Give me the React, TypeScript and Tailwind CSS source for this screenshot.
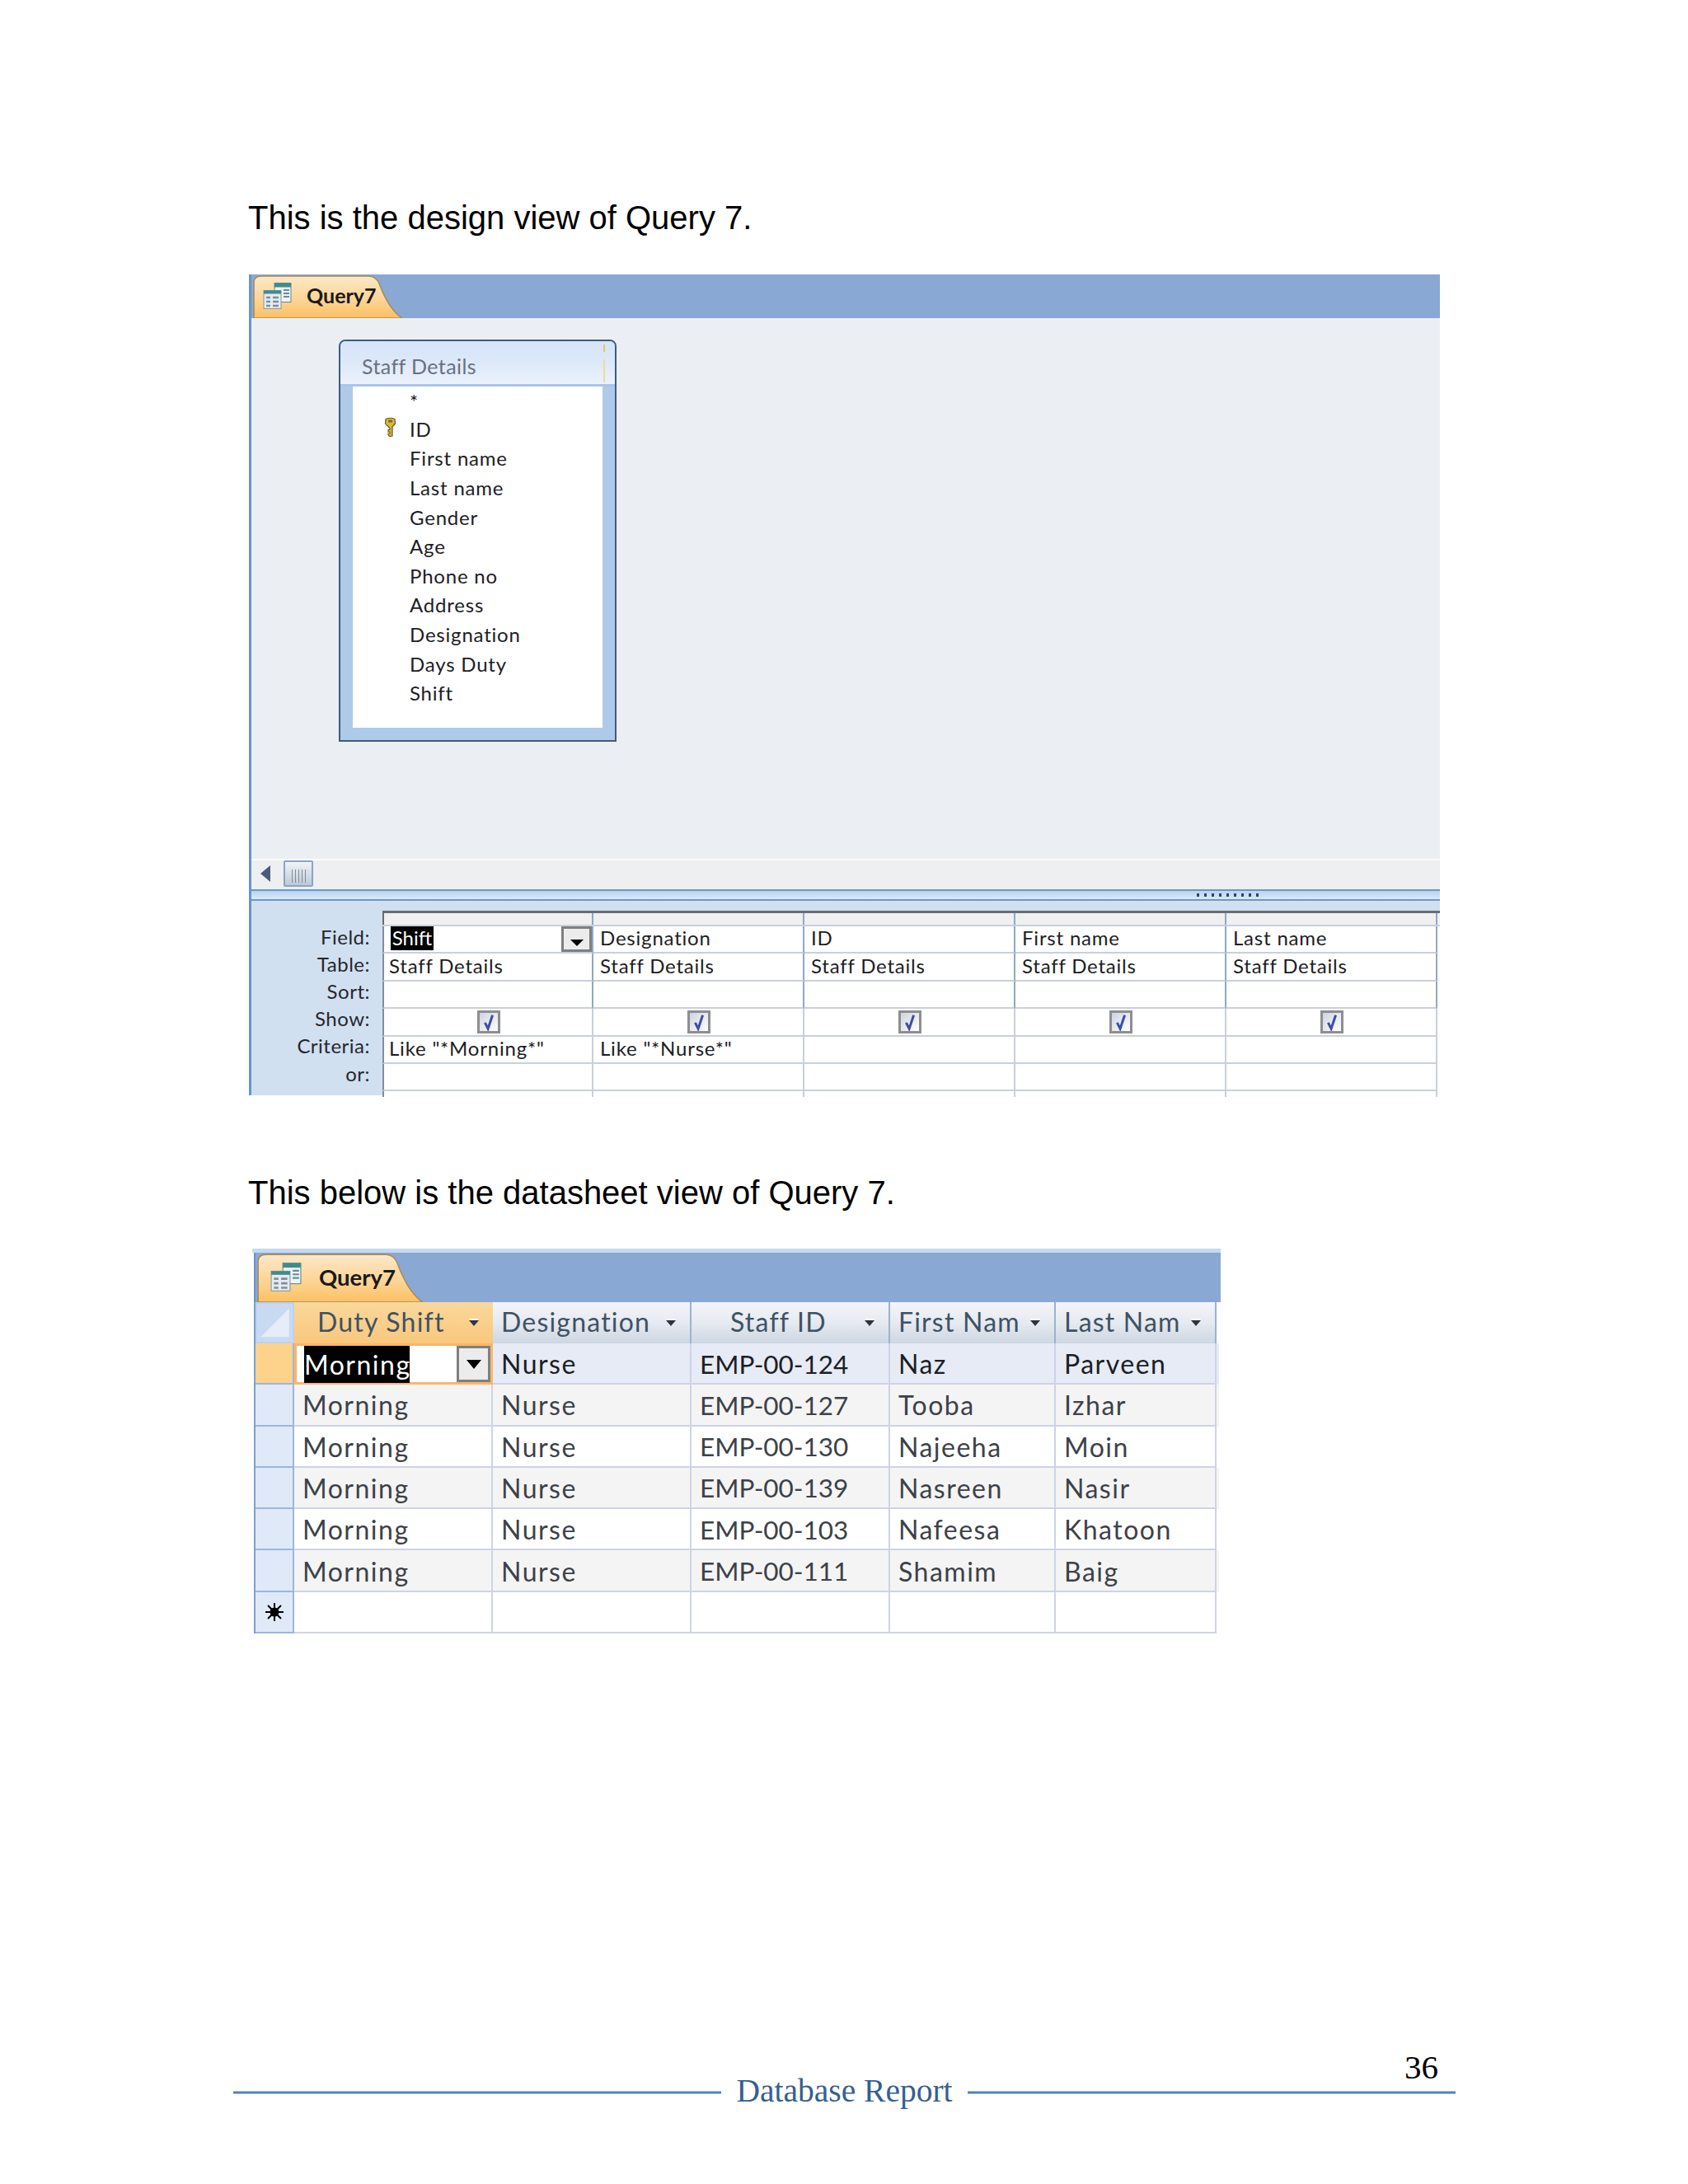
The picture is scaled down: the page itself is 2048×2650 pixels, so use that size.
import { ReactNode } from "react";

const DESIGN_COLS = [
  { field: "Shift", table: "Staff Details", criteria: 'Like "*Morning*"' },
  { field: "Designation", table: "Staff Details", criteria: 'Like "*Nurse*"' },
  { field: "ID", table: "Staff Details", criteria: "" },
  { field: "First name", table: "Staff Details", criteria: "" },
  { field: "Last name", table: "Staff Details", criteria: "" },
];
const LABELS = ["Field:", "Table:", "Sort:", "Show:", "Criteria:", "or:"];
const FIELDS = ["ID", "First name", "Last name", "Gender", "Age", "Phone no", "Address", "Designation", "Days Duty", "Shift"];
const STAFF = [
  ["Nurse", "EMP-00-124", "Naz", "Parveen"],
  ["Nurse", "EMP-00-127", "Tooba", "Izhar"],
  ["Nurse", "EMP-00-130", "Najeeha", "Moin"],
  ["Nurse", "EMP-00-139", "Nasreen", "Nasir"],
  ["Nurse", "EMP-00-103", "Nafeesa", "Khatoon"],
  ["Nurse", "EMP-00-111", "Shamim", "Baig"],
];
const SHEET_COLS = ["w-[241px]", "w-[241px] text-[31.500px] tracking-normal", "w-[201px]", "w-[195px]"];

function QueryIcon({ className }: { className: string }) {
  return (
    <svg viewBox="0 0 35 32" className={className}>
      <rect x="14" y="0.5" width="20" height="23" fill="#eef3f3" stroke="#5c8a8c" />
      <rect x="14" y="0.5" width="20" height="5" fill="#3f8c8c" />
      <path d="M25 9h7M25 13h7M25 17h7" stroke="#6c8a9c" strokeWidth="2" />
      <rect x="1" y="9.5" width="21" height="22" fill="#e6ebf0" stroke="#7f9aa8" />
      <rect x="1" y="9.5" width="21" height="4" fill="#3f8c8c" />
      <path d="M4 18h5M12 18h7M4 23h5M12 23h7M4 28h5M12 28h7" stroke="#7d8f9c" strokeWidth="2.4" />
    </svg>
  );
}

function QueryTab({ className, textClass, iconClass, gap }: { className: string; textClass: string; iconClass: string; gap: string }) {
  return (
    <div className={`relative h-full ${className}`}>
      <svg viewBox="0 0 181 52" preserveAspectRatio="none" className="absolute inset-0 h-full w-full">
        <defs>
          <linearGradient id="tabfill" x1="0" y1="0" x2="0" y2="1">
            <stop offset="0" stopColor="#fce8c8" />
            <stop offset="0.55" stopColor="#fdd596" />
            <stop offset="1" stopColor="#fdc061" />
          </linearGradient>
        </defs>
        <path d="M1 52V9Q1 1 10 1H140Q149 1 153 10Q165 42 181 52Z" fill="url(#tabfill)" stroke="#a98b5a" strokeWidth="1.6" vectorEffect="non-scaling-stroke" />
      </svg>
      <div className={`relative flex h-full items-center pb-[2px] ${gap}`}>
        <QueryIcon className={iconClass} />
        <span className={`font-[Lato,sans-serif] font-bold text-[#1a1a1a] ${textClass}`}>Query7</span>
      </div>
    </div>
  );
}

function KeyIcon() {
  return (
    <svg viewBox="0 0 15 24" className="h-[24px] w-[15px]">
      <path d="M2 2.5Q7.5 0 13 2.5L13.5 8Q11 11 10 11.500L10 23L6.500 23.500L5 21.500V20H7V18H5V15.500H7V13.500L5 11.500Q3 10 1.500 8Z" fill="#d9b93c" stroke="#6e5a1c" strokeWidth="1.200" />
      <rect x="5" y="3.500" width="5" height="3" fill="#7a6a30" />
    </svg>
  );
}

function Checkbox() {
  return (
    <div className="ml-[2px] flex h-[28px] w-[28px] items-center justify-center border-[3px] border-[#8e8e8e] bg-gradient-to-br from-[#cfd3e2] to-white">
      <svg viewBox="0 0 18 24" className="h-[22px] w-[18px]">
        <path d="M4 13L8 21L14 3" fill="none" stroke="#3b4da6" strokeWidth="3.200" />
      </svg>
    </div>
  );
}

function DropButton({ className, arrow }: { className: string; arrow: string }) {
  return (
    <div className={`flex items-center justify-center border-[3px] border-[#7f7f7f] bg-[#ececec] ${className}`}>
      <div className={`border-x-transparent border-t-black ${arrow}`} />
    </div>
  );
}

function SmallArrow() {
  return <div className="mt-[4px] h-0 w-0 border-x-[6px] border-t-[7px] border-x-transparent border-t-[#2f343c] drop-shadow-[0_-2px_0_#ffffff]" />;
}

function StaffTable() {
  return (
    <div className="ml-[106px] mt-[25px] flex h-[488px] w-[337px] flex-col rounded-t-[8px] border-2 border-[#3f5a80] bg-[#aecaea]">
      <div className="relative flex h-[55px] shrink-0 items-center rounded-t-[6px] border-b-[3px] border-[#a9c5e8] bg-gradient-to-b from-[#d5e4f7] via-[#dde9f9] to-[#eaf2fc] pl-[26px] pt-[10px] font-[Lato,sans-serif] text-[25px] tracking-[0.4px] text-[#6a7080]">
        Staff Details
        <div className="absolute right-[12px] top-[4px] h-[9px] w-[2px] bg-[#e5c860]" />
        <div className="absolute bottom-[2px] right-[12px] h-[28px] w-[2px] bg-[#eedb9c]" />
      </div>
      <div className="mx-[15px] flex h-[414px] flex-col bg-white pl-[69px] font-[Lato,sans-serif] text-[24px] tracking-[0.8px] text-[#1d1d26]">
        <div className="flex h-[34px] items-center pt-[2px] text-[24px]">*</div>
        {FIELDS.map((f) => (
          <div key={f} className="relative flex h-[35.600px] shrink-0 items-center">
            {f === "ID" && (
              <div className="absolute left-[-31px] top-[3px]">
                <KeyIcon />
              </div>
            )}
            {f}
          </div>
        ))}
      </div>
    </div>
  );
}

function DesignGrid() {
  return (
    <div className="flex h-[236px] bg-[#d0e0f1]">
      <div className="flex w-[159px] shrink-0 flex-col pr-[15px] pt-[27px] text-right font-[Lato,sans-serif] text-[24px] tracking-[0.5px] text-[#26262c]">
        {LABELS.map((l) => (
          <div key={l} className="flex h-[33.200px] items-center justify-end">
            {l}
          </div>
        ))}
      </div>
      <div className="mt-[12px] flex-1">
        <div className="flex h-[17px] border-t-[3px] border-[#666d75] bg-[#f0f0f0]">
          {DESIGN_COLS.map((c) => (
            <div key={c.field} className="w-[256px] border-r-2 border-[#8fa8c8] first:border-l-2 first:border-l-[#666d75]" />
          ))}
        </div>
        <div className="border-t-2 border-[#c9cfdc]">
          {[0, 1, 2, 3, 4, 5].map((row) => (
            <div key={row} className="flex h-[33.400px] bg-white">
              {DESIGN_COLS.map((c, i) => (
                <div
                  key={c.field}
                  className={`relative flex w-[256px] items-center border-b-2 border-b-[#c9cfdc] border-r-2 font-[Lato,sans-serif] text-[24px] tracking-[0.8px] text-[#1d1d24] ${row < 3 ? "border-r-[#8fa8c8]" : "border-r-[#c9cfdc]"} ${i === 0 ? "border-l-2 border-l-[#7f8da0]" : ""} ${row === 3 ? "justify-center" : "pb-[3px]"} ${row !== 3 && i === 0 ? "pl-[6px]" : ""} ${row !== 3 && i > 0 ? "pl-[8px]" : ""}`}
                >
                  {row === 0 && i === 0 && (
                    <>
                      <span className="ml-[2px] flex h-[29px] w-[52px] items-center justify-center bg-black tracking-normal text-white">{c.field}</span>
                      <DropButton className="absolute right-0 top-0 h-[31px] w-[37px]" arrow="mt-[8px] h-0 w-0 border-x-[8px] border-t-[8px]" />
                    </>
                  )}
                  {row === 0 && i > 0 && c.field}
                  {row === 1 && c.table}
                  {row === 3 && <Checkbox />}
                  {row === 4 && c.criteria}
                </div>
              ))}
            </div>
          ))}
        </div>
        <div className="flex h-[7px] bg-white">
          {DESIGN_COLS.map((c, i) => (
            <div key={c.field} className={`w-[256px] border-r-2 border-[#c9cfdc] ${i === 0 ? "border-l-2 border-l-[#7f8da0]" : ""}`} />
          ))}
        </div>
      </div>
    </div>
  );
}

function HeaderCell({ width, label, pad, active }: { width: string; label: string; pad: string; active?: boolean }) {
  return (
    <div
      className={`flex h-full items-center justify-between pb-[3px] pr-[17px] tracking-[1.200px] text-[#3f5264] ${width} ${pad} ${active ? "bg-gradient-to-b from-[#fad89b] to-[#f9c77c]" : "border-r-2 border-r-[#9db2cc] bg-gradient-to-b from-[#f3f5f9] via-[#e6eaf1] to-[#cdd6e2]"}`}
    >
      {label}
      <SmallArrow />
    </div>
  );
}

function SheetRow({ index, cells }: { index: number; cells: string[] }) {
  const first = index === 0;
  const bg = first ? "bg-[#e6ebf6]" : index % 2 === 1 ? "bg-[#f4f4f4]" : "bg-white";
  return (
    <div className={`flex h-[50.300px] ${bg} ${first ? "text-[#1c1e24]" : "text-[#3d4148]"}`}>
      <div className={`w-[47px] shrink-0 border-b-2 border-r-2 border-b-[#9ab7dc] border-r-[#9ab7dc] ${first ? "bg-[#fdd28a]" : "bg-[#e0e9f7]"}`} />
      {first ? (
        <div className="flex w-[241px] shrink-0 items-center justify-between border-[3px] border-[#fbb668] bg-white pl-[9px] pr-0">
          <span className="flex h-[45px] w-[128px] items-center bg-black pt-[2px] text-white">Morning</span>
          <DropButton className="h-[44px] w-[41px]" arrow="h-0 w-0 border-x-[9px] border-t-[11px]" />
        </div>
      ) : (
        <div className="flex w-[241px] shrink-0 items-center border-b-2 border-r-2 border-[#cfd3e6] pl-[10px] pt-[2px]">Morning</div>
      )}
      {cells.map((c, i) => (
        <div key={c} className={`flex shrink-0 items-center border-b-2 border-r-2 border-[#cfd3e6] pl-[10px] pt-[2px] ${SHEET_COLS[i]}`}>
          {c}
        </div>
      ))}
    </div>
  );
}

function Heading({ children, className }: { children: ReactNode; className: string }) {
  return <p className={`ml-[301px] text-[40px] leading-[48px] text-black ${className}`}>{children}</p>;
}

export default function App() {
  return (
    <div className="flex h-[2650px] w-[2048px] flex-col overflow-hidden bg-white font-['Liberation_Sans',Arial,sans-serif]">
      <Heading className="mt-[240px]">This is the design view of Query 7.</Heading>

      {/* design view */}
      <div className="ml-[302px] mt-[45px] w-[1445px] border-l-[3px] border-[#6a93c9]">
        <div className="h-[53px] bg-[#89a8d3] pl-[2px] pt-px">
          <QueryTab className="w-[181px]" textClass="text-[25px]" iconClass="ml-[12px] h-[32px] w-[35px]" gap="gap-[18px]" />
        </div>
        <div className="h-[656px] bg-[#ebeff3] pt-px">
          <StaffTable />
        </div>
        <div className="flex h-[37px] items-center border-t-2 border-[#fafbfc] bg-[#eeeff1] pb-[3px] pl-[11px]">
          <div className="h-0 w-0 border-y-[10px] border-r-[12px] border-y-transparent border-r-[#4b5a80]" />
          <div className="ml-[16px] flex h-[32px] w-[36px] items-center justify-center rounded-[2px] border-2 border-[#8ba4c4] bg-gradient-to-b from-[#f2f4f7] to-[#bfc9d6]">
            <div className="mt-[6px] flex gap-[3px]">
              {[0, 1, 2, 3, 4].map((n) => (
                <div key={n} className="h-[16px] w-px bg-[#7f8a9c]" />
              ))}
            </div>
          </div>
        </div>
        <div className="flex h-[14px] items-center justify-end border-y-2 border-[#6f97c3] bg-gradient-to-b from-[#b5d3f3] to-[#dce9f9] pr-[220px]">
          <div className="flex gap-[6px]">
            {[0, 1, 2, 3, 4, 5, 6, 7, 8].map((n) => (
              <div key={n} className="h-[4px] w-[3px] bg-[#3a4556]" />
            ))}
          </div>
        </div>
        <DesignGrid />
      </div>

      <Heading className="mt-[94px]">This below is the datasheet view of Query 7.</Heading>

      {/* datasheet view */}
      <div className="ml-[306px] mt-[44px] w-[1175px] border-t-[5px] border-[#c5daf0]">
        <div className="ml-[2px] h-[60px] border-l-2 border-[#6a93c9] bg-[#89a8d3] pl-[2px] pt-px">
          <QueryTab className="w-[201px]" textClass="text-[27.500px]" iconClass="ml-[16px] h-[37px] w-[38px]" gap="gap-[21px]" />
        </div>
        <div className="ml-[2px] w-[1171px] border-l-2 border-[#7ba0d0] font-[Lato,sans-serif] text-[32px] tracking-[1.5px]">
          <div className="flex h-[50px]">
            <div className="h-full w-[47px] shrink-0 border-2 border-[#bcd2ee] bg-[#c8daf2]">
              <svg viewBox="0 0 40 40" className="h-full w-full">
                <path d="M36 4V36H4Z" fill="#e6edf6" />
              </svg>
            </div>
            <HeaderCell width="w-[241px]" label="Duty Shift" pad="pl-[28px]" active />
            <HeaderCell width="w-[241px]" label="Designation" pad="pl-[10px]" />
            <HeaderCell width="w-[241px]" label="Staff ID" pad="pl-[47px]" />
            <HeaderCell width="w-[201px]" label="First Nam" pad="pl-[10px]" />
            <HeaderCell width="w-[195px]" label="Last Nam" pad="pl-[10px]" />
          </div>
          {STAFF.map((r, i) => (
            <SheetRow key={r[1]} index={i} cells={r} />
          ))}
          <div className="flex h-[50px] bg-white">
            <div className="flex w-[47px] shrink-0 items-center justify-center border-b-2 border-r-2 border-b-[#9ab7dc] border-r-[#9ab7dc] bg-[#e0e9f7]">
              <svg viewBox="0 0 24 24" className="h-[24px] w-[24px]" stroke="#000" strokeWidth="2">
                <path d="M12 1V23M1 12H23M4 4L20 20M20 4L4 20" />
                <circle cx="12" cy="12" r="4.500" fill="#000" />
              </svg>
            </div>
            {["w-[241px]", ...SHEET_COLS].map((w, i) => (
              <div key={i} className={`shrink-0 border-b-2 border-r-2 border-[#cfd3e6] ${w}`} />
            ))}
          </div>
        </div>
      </div>

      {/* footer */}
      <div className="ml-auto mr-[303px] mt-[511px] h-[30px] font-['Liberation_Serif',serif] text-[41px] leading-[30px] text-black">36</div>
      <div className="-mt-[6px] ml-[283px] flex h-[40px] w-[1483px] items-center gap-[18px] font-['Liberation_Serif',serif] text-[39.500px] leading-[40px] text-[#365f91]">
        <div className="mt-[5px] h-[4px] flex-1 border-y border-[#a7c0de] bg-[#4f81bd]" />
        <span>Database Report</span>
        <div className="mt-[5px] h-[4px] flex-1 border-y border-[#a7c0de] bg-[#4f81bd]" />
      </div>
    </div>
  );
}
